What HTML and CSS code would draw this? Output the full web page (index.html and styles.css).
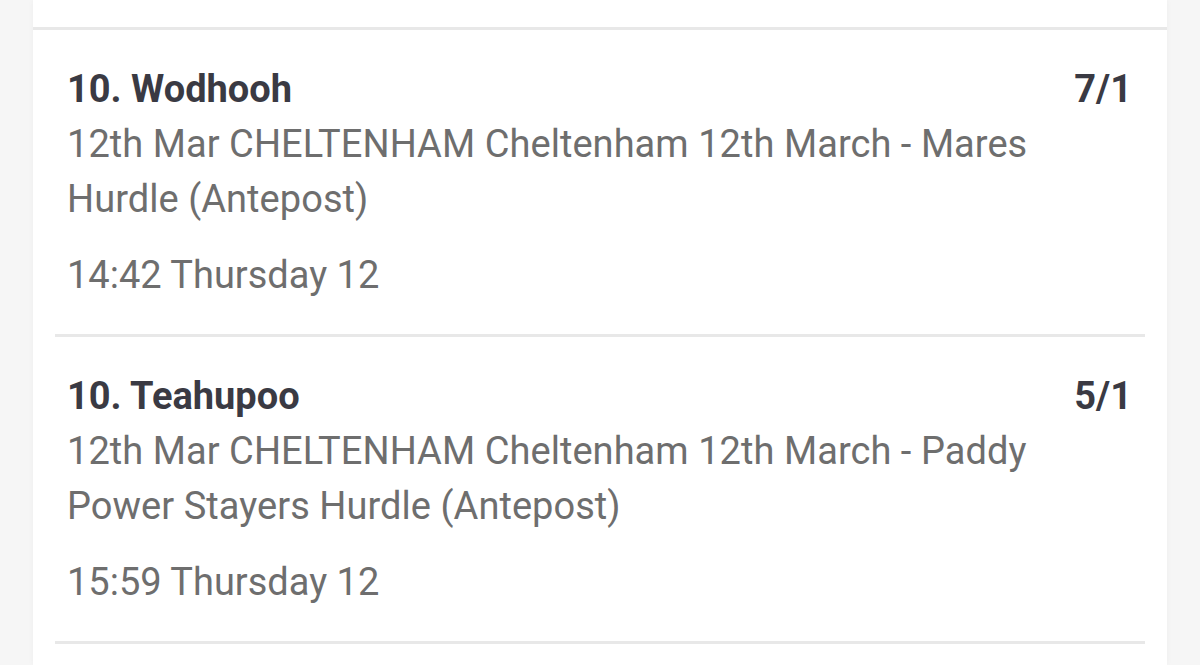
FILE: index.html
```html
<!DOCTYPE html>
<html>
<head>
<meta charset="utf-8">
<link rel="stylesheet" href="styles.css">
</head>
<body>
<div class="card">
  <div class="card-top"></div>
  <div class="bet">
    <div class="bet-head">
      <span class="bet-name">10. Wodhooh</span>
      <span class="bet-odds">7/1</span>
    </div>
    <div class="bet-desc">12th Mar CHELTENHAM Cheltenham 12th March - Mares Hurdle (Antepost)</div>
    <div class="bet-time">14:42 Thursday 12</div>
  </div>
  <div class="bet">
    <div class="bet-head">
      <span class="bet-name">10. Teahupoo</span>
      <span class="bet-odds">5/1</span>
    </div>
    <div class="bet-desc">12th Mar CHELTENHAM Cheltenham 12th March - Paddy Power Stayers Hurdle (Antepost)</div>
    <div class="bet-time">15:59 Thursday 12</div>
  </div>
</div>
</body>
</html>
```
FILE: styles.css
```css
html, body {
  margin: 0;
  padding: 0;
  height: 100%;
}
body {
  background: #f6f6f6;
  font-family: Roboto, "Noto Sans", sans-serif;
  overflow: hidden;
}
.card {
  margin: 0 33px;
  background: #ffffff;
  min-height: 100%;
  box-shadow: 0 0 6px rgba(0, 0, 0, 0.04);
}
.card-top {
  height: 27px;
  border-bottom: 3px solid #e8e8e8;
}
.bet {
  margin: 0 22px;
  padding: 32px 13px 31px 12px;
  border-bottom: 3px solid #e8e8e8;
}
.bet-head {
  display: flex;
  justify-content: space-between;
  align-items: baseline;
  font-size: 38px;
  line-height: 55px;
  font-weight: 700;
  color: #3a3a43;
}
.bet-desc {
  font-size: 38px;
  line-height: 55px;
  letter-spacing: 0.05px;
  color: #6e6e6e;
}
.bet-time {
  margin-top: 21px;
  font-size: 38px;
  line-height: 55px;
  color: #6e6e6e;
}
```
